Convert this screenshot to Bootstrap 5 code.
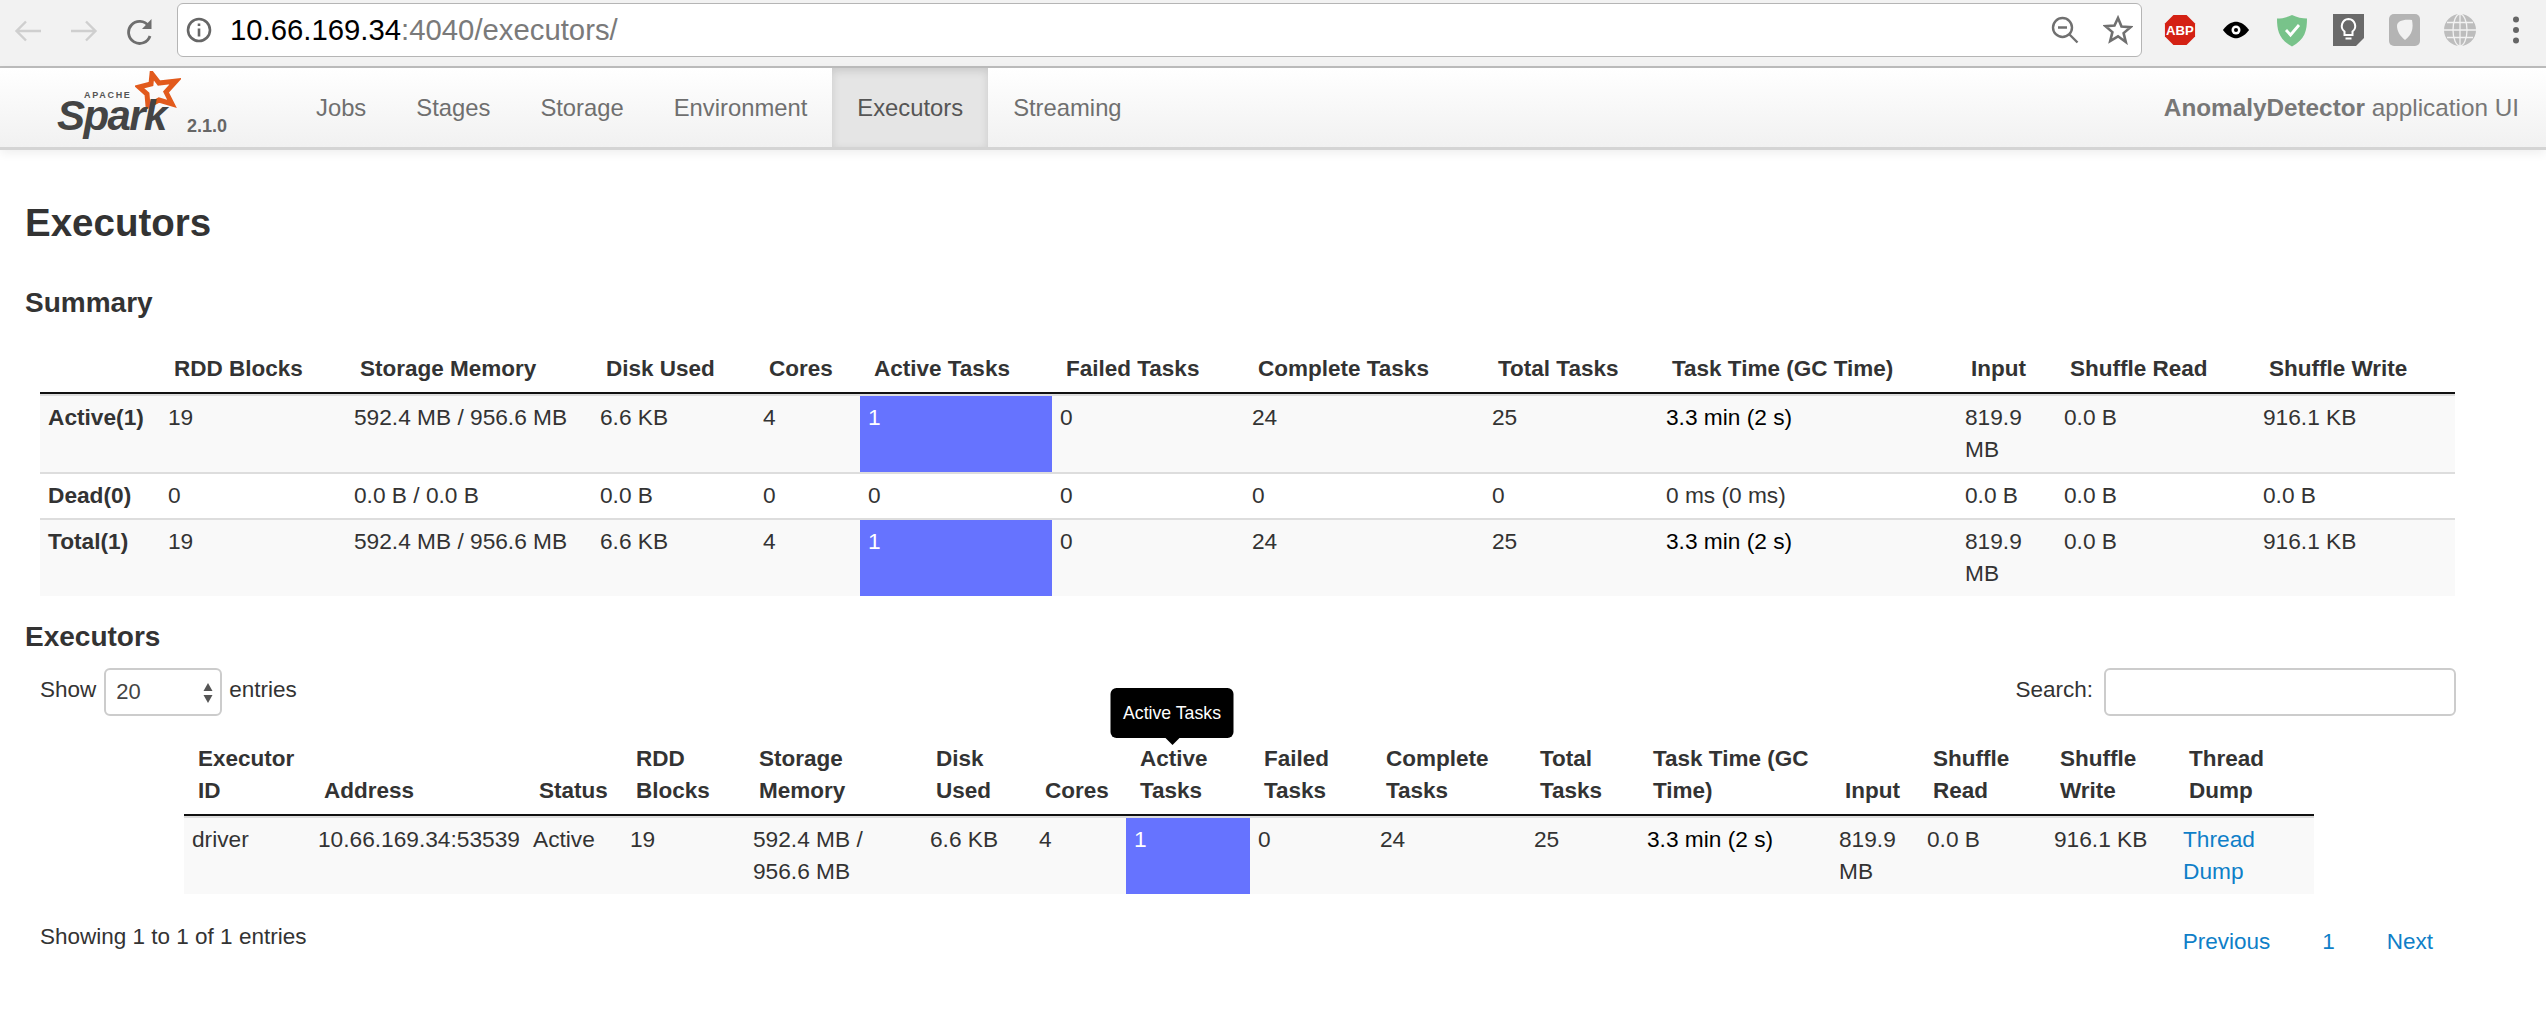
<!DOCTYPE html>
<html lang="en">

<head>
    <meta charset="UTF-8" />
    <meta name="viewport" content="width=device-width, initial-scale=1.0" />
    <title>AnomalyDetector - Executors</title>
    <link href="https://cdn.jsdelivr.net/npm/bootstrap@5.3.0/dist/css/bootstrap.min.css" rel="stylesheet" />
    <style>
        body { font-family: "Liberation Sans", Arial, sans-serif; font-size: 22.5px; line-height: 32px; color: #333; overflow: hidden; }

        /* browser chrome */
        .chrome-bar { height: 68px; padding-bottom: 6px; background: #f2f2f2; border-bottom: 2px solid #bdbdbd; }
        .nav-btn { width: 56px; }
        .nav-btns { width: 177px; }
        .url-box { width: 1965px; height: 54px; background: #fff; border: 1px solid #b5b5b5; border-radius: 6px; }
        .url-text { font-size: 29.3px; color: #7a7a7a; margin-left: 18px; }
        .url-host { color: #000; }
        .ext-slot { width: 56px; line-height: 0; }
        .ext-icons { padding-left: 10px; }

        /* spark navbar */
        .spark-nav { height: 82px; background: linear-gradient(#fff, #f1f1f1); border-bottom: 3px solid #d4d4d4; box-shadow: 0 3px 10px rgba(0, 0, 0, .07); }
        .spark-logo { width: 291px; height: 79px; }
        .logo-star { left: 135px; top: 3px; }
        .logo-word { left: 57px; top: 31px; font-size: 42px; line-height: 34px; font-weight: 700; font-style: italic; color: #444; letter-spacing: -1.6px; }
        .logo-apache { left: 84px; top: 23px; font-size: 9px; line-height: 8px; font-weight: 700; color: #555; letter-spacing: 1.7px; }
        .logo-version { left: 187px; top: 47px; font-size: 18px; line-height: 22px; font-weight: 700; color: #666; }
        .spark-nav .navbar-nav .nav-link { padding: 0 25px; height: 79px; line-height: 80px; color: #6f6f6f; font-size: 23.8px; }
        .spark-nav .navbar-nav .nav-link.active { color: #555; background: #e5e5e5; box-shadow: inset 0 3px 8px rgba(0, 0, 0, .125); }
        .app-title { color: #777; font-size: 24.3px; line-height: 80px; padding-right: 27px; }

        /* page */
        .page-body { padding: 43px 90px 0 25px; }
        .title-main { font-size: 38.5px; line-height: 60px; font-weight: 700; color: #333; margin: 0; }
        .title-sub { font-size: 28px; line-height: 40px; font-weight: 700; color: #333; margin: 0; }
        .summary-title { margin-top: 30px; }
        .indent-block { padding-left: 15px; }

        .spark-table { table-layout: fixed; border-collapse: separate; border-spacing: 0; margin: 0; color: #333; --bs-table-striped-bg: #f9f9f9; --bs-table-striped-color: #333; }
        .spark-table th { padding: 5px 4px 7px 14px; border: 0; border-bottom: 2px solid #111; font-weight: 700; vertical-align: bottom; position: relative; }
        .spark-table td { padding: 5px 8px 7px; border: 0; border-top: 2px solid #ddd; vertical-align: top; font-size: 22.7px; }
        .spark-table > tbody > tr > td.cell-busy { background: #6673ff; color: #fff; box-shadow: none; }
        .spark-table > tbody > tr > td.time-val { color: #000; }
        .spark-table a { color: #0f7fc8; text-decoration: none; }

        .summary-wrap { margin-top: 25px; }
        .summary-table { width: 2415px; }
        .exec-title { margin-top: 21px; }

        .filter-row { margin-top: 11px; height: 48px; }
        .select-wrap { margin: 0 7px 0 8px; width: 118px; height: 48px; }
        .entries-select { appearance: none; width: 118px; height: 48px; font-size: 22px; color: #444; padding: 0 10px; border: 2px solid #ccc; border-radius: 6px; background: #fff; font-family: inherit; }
        .select-arrows { right: 9px; top: 15px; pointer-events: none; }
        .search-input { width: 352px; height: 48px; margin-left: 11px; border: 2px solid #ccc; border-radius: 6px; }

        .exec-wrap { margin-top: 22px; padding-left: 159px; }
        .exec-table { width: 2130px; }

        .hint-tip { left: 50%; bottom: 76px; transform: translateX(-50%); margin-left: -16px; width: 123px; height: 50px; background: #000; color: #fff; font-size: 17.7px; font-weight: 400; line-height: 50px; text-align: center; border-radius: 6px; }
        .hint-tip::after { content: ""; position: absolute; left: 50%; top: 100%; margin-left: -7px; border: 7px solid transparent; border-bottom: 0; border-top-color: #000; }

        .foot-row { margin-top: 27px; }
        .pager-links { padding-top: 5px; margin-right: -2px; }
        .pager-links a { color: #0f7fc8; text-decoration: none; padding: 0 26px; }
        .pager-links a:last-child { padding-right: 25px; }

        /* column widths, measured off the tables */
        .sc1 { width: 120px; } .sc2 { width: 186px; } .sc3 { width: 246px; } .sc4 { width: 163px; } .sc5 { width: 105px; } .sc6 { width: 192px; } .sc7 { width: 192px; } .sc8 { width: 240px; } .sc9 { width: 174px; } .sc10 { width: 299px; } .sc11 { width: 99px; } .sc12 { width: 199px; } .sc13 { width: 200px; }
        .ec1 { width: 126px; } .ec2 { width: 215px; } .ec3 { width: 97px; } .ec4 { width: 123px; } .ec5 { width: 177px; } .ec6 { width: 109px; } .ec7 { width: 95px; } .ec8 { width: 124px; } .ec9 { width: 122px; } .ec10 { width: 154px; } .ec11 { width: 113px; } .ec12 { width: 192px; } .ec13 { width: 88px; } .ec14 { width: 127px; } .ec15 { width: 129px; } .ec16 { width: 139px; }
    </style>
</head>

<body>
    <!-- browser toolbar -->
    <div class="chrome-bar d-flex align-items-center">
        <div class="nav-btns d-flex align-items-center flex-shrink-0">
            <div class="nav-btn text-center">
                <svg width="28" height="22" viewBox="0 0 28 22" fill="none" stroke="#cfcfcf" stroke-width="2.4"><path d="M27 11H3M12 1.500L2.500 11l9.500 9.500" /></svg>
            </div>
            <div class="nav-btn text-center">
                <svg width="28" height="22" viewBox="0 0 28 22" fill="none" stroke="#cfcfcf" stroke-width="2.4"><path d="M1 11h24M16 1.500l9.500 9.500-9.500 9.500" /></svg>
            </div>
            <div class="nav-btn text-center">
                <svg width="28" height="27" viewBox="0 0 28 27" fill="none" stroke="#6e6e6e" stroke-width="2.800"><path d="M24 18a11 11 0 1 1-1.500-10" /><path d="M25.500 1v10h-9.500" fill="#6e6e6e" stroke="none" /></svg>
            </div>
        </div>
        <div class="url-box d-flex align-items-center flex-shrink-0">
            <svg class="ms-2 flex-shrink-0" width="26" height="26" viewBox="0 0 26 26" fill="none" stroke="#666" stroke-width="2.600"><circle cx="13" cy="13" r="11" /><path d="M13 11.500v8M13 6.500v2.600" /></svg>
            <div class="url-text flex-grow-1"><span class="url-host">10.66.169.34</span>:4040/executors/</div>
            <svg class="flex-shrink-0" width="28" height="28" viewBox="0 0 28 28" fill="none" stroke="#707070" stroke-width="2.400"><circle cx="11.500" cy="11.500" r="9.500" /><path d="M7 11.500h9M18.500 18.500l8 8" /></svg>
            <svg class="ms-4 me-2 flex-shrink-0" width="30" height="30" viewBox="0 0 30 30" fill="none" stroke="#707070" stroke-width="2.600"><path d="M15 3l3.500 8.500 9 .7-6.900 5.900 2.200 8.900L15 21.300 7.200 26l2.200-8.900L2.500 11.200l9-.7z" /></svg>
        </div>
        <div class="ext-icons d-flex align-items-center flex-shrink-0">
            <div class="ext-slot text-center">
                <svg width="32" height="32" viewBox="0 0 34 34"><path d="M10 1h14l9 9v14l-9 9H10l-9-9V10z" fill="#d42114" /><text x="17" y="22.500" text-anchor="middle" fill="#fff" font-family="Liberation Sans" font-weight="700" font-size="14">ABP</text></svg>
            </div>
            <div class="ext-slot text-center">
                <svg width="32" height="18" viewBox="0 0 34 22"><path d="M1 11C8 2 14 1 17 1s9 1 16 10c-7 9-13 10-16 10S8 20 1 11z" fill="#000" /><circle cx="17" cy="11" r="5.500" fill="#fff" /><circle cx="17" cy="11" r="2.500" fill="#000" /></svg>
            </div>
            <div class="ext-slot text-center">
                <svg width="32" height="33" viewBox="0 0 32 33"><path d="M16 1c5 2.500 10 3.500 15 3.500 0 12-2 21-15 28C3 25.500 1 16.500 1 4.500 6 4.500 11 3.500 16 1z" fill="#78c38a" /><path d="M10 16l4.500 5L23 11" fill="none" stroke="#fff" stroke-width="2.800" /></svg>
            </div>
            <div class="ext-slot text-center">
                <svg width="31" height="32" viewBox="0 0 31 32"><path d="M0 0h31v24l-8 8H0z" fill="#6a6a6a" /><path d="M15.500 5a7 7 0 0 0-4 12.500V21h8v-3.500a7 7 0 0 0-4-12.500zM12.500 24.500h6" fill="none" stroke="#fff" stroke-width="2" /></svg>
            </div>
            <div class="ext-slot text-center">
                <svg width="31" height="32" viewBox="0 0 31 32"><rect width="31" height="32" rx="5" fill="#b4b4b4" /><path d="M8 12c0-5 6-7 15-6 1.500 8 .5 14-7 20-5-4-8-9-8-14z" fill="#f2f2f2" /></svg>
            </div>
            <div class="ext-slot text-center">
                <svg width="32" height="32" viewBox="0 0 32 32" fill="none" stroke="#f2f2f2" stroke-width="1.300"><circle cx="16" cy="16" r="16" fill="#bdbdbd" stroke="none" /><ellipse cx="16" cy="16" rx="7" ry="16" /><path d="M16 0v32M3 8.500h26M0 16h32M3 23.500h26" /></svg>
            </div>
            <div class="ext-slot text-center">
                <svg width="8" height="28" viewBox="0 0 8 28" fill="#666"><circle cx="4" cy="3.500" r="3" /><circle cx="4" cy="14" r="3" /><circle cx="4" cy="24.500" r="3" /></svg>
            </div>
        </div>
    </div>

    <!-- spark navbar -->
    <nav class="navbar navbar-expand spark-nav p-0 align-items-start">
        <div class="spark-logo position-relative flex-shrink-0">
            <svg class="logo-star position-absolute" width="46" height="38" viewBox="0 0 46 38" fill="none" stroke="#e25a1c" stroke-width="5" stroke-linejoin="miter"><path d="M17 3l7 9 17-2-10 11 6 12-13-4-11 6-1-12L4 16l12-3z" /></svg>
            <span class="logo-apache position-absolute">APACHE</span>
            <span class="logo-word position-absolute">Spark</span>
            <span class="logo-version position-absolute">2.1.0</span>
        </div>
        <ul class="navbar-nav">
            <li class="nav-item"><a class="nav-link" href="#">Jobs</a></li>
            <li class="nav-item"><a class="nav-link" href="#">Stages</a></li>
            <li class="nav-item"><a class="nav-link" href="#">Storage</a></li>
            <li class="nav-item"><a class="nav-link" href="#">Environment</a></li>
            <li class="nav-item"><a class="nav-link active" href="#">Executors</a></li>
            <li class="nav-item"><a class="nav-link" href="#">Streaming</a></li>
        </ul>
        <div class="app-title ms-auto"><strong>AnomalyDetector</strong> application UI</div>
    </nav>

    <div class="page-body">
        <h3 class="title-main">Executors</h3>
        <h4 class="title-sub summary-title">Summary</h4>

        <div class="indent-block summary-wrap">
            <table class="table table-striped spark-table summary-table">
                <colgroup>
                    <col class="sc1"><col class="sc2"><col class="sc3"><col class="sc4"><col class="sc5"><col class="sc6"><col class="sc7"><col class="sc8"><col class="sc9"><col class="sc10"><col class="sc11"><col class="sc12"><col class="sc13">
                </colgroup>
                <thead>
                    <tr>
                        <th></th><th>RDD Blocks</th><th>Storage Memory</th><th>Disk Used</th><th>Cores</th><th>Active Tasks</th><th>Failed Tasks</th><th>Complete Tasks</th><th>Total Tasks</th><th>Task Time (GC Time)</th><th>Input</th><th>Shuffle Read</th><th>Shuffle Write</th>
                    </tr>
                </thead>
                <tbody>
                    <tr>
                        <td><strong>Active(1)</strong></td><td>19</td><td>592.4 MB / 956.6 MB</td><td>6.6 KB</td><td>4</td><td class="cell-busy">1</td><td>0</td><td>24</td><td>25</td><td class="time-val">3.3 min (2 s)</td><td>819.9 MB</td><td>0.0 B</td><td>916.1 KB</td>
                    </tr>
                    <tr>
                        <td><strong>Dead(0)</strong></td><td>0</td><td>0.0 B / 0.0 B</td><td>0.0 B</td><td>0</td><td>0</td><td>0</td><td>0</td><td>0</td><td>0 ms (0 ms)</td><td>0.0 B</td><td>0.0 B</td><td>0.0 B</td>
                    </tr>
                    <tr>
                        <td><strong>Total(1)</strong></td><td>19</td><td>592.4 MB / 956.6 MB</td><td>6.6 KB</td><td>4</td><td class="cell-busy">1</td><td>0</td><td>24</td><td>25</td><td class="time-val">3.3 min (2 s)</td><td>819.9 MB</td><td>0.0 B</td><td>916.1 KB</td>
                    </tr>
                </tbody>
            </table>
        </div>

        <h4 class="title-sub exec-title">Executors</h4>

        <div class="indent-block filter-row d-flex justify-content-between align-items-center">
            <div class="d-flex align-items-center">
                <span class="pb-1">Show</span>
                <div class="select-wrap position-relative">
                    <select class="entries-select"><option>20</option></select>
                    <svg class="select-arrows position-absolute" width="10" height="20" viewBox="0 0 10 20" fill="#555"><path d="M5 0l4.500 8h-9zM5 20l-4.500-8h9z" /></svg>
                </div>
                <span class="pb-1">entries</span>
            </div>
            <div class="d-flex align-items-center">
                <span class="pb-1">Search:</span>
                <input class="search-input" type="text" />
            </div>
        </div>

        <div class="exec-wrap">
            <table class="table table-striped spark-table exec-table">
                <colgroup>
                    <col class="ec1"><col class="ec2"><col class="ec3"><col class="ec4"><col class="ec5"><col class="ec6"><col class="ec7"><col class="ec8"><col class="ec9"><col class="ec10"><col class="ec11"><col class="ec12"><col class="ec13"><col class="ec14"><col class="ec15"><col class="ec16">
                </colgroup>
                <thead>
                    <tr>
                        <th>Executor ID</th><th>Address</th><th>Status</th><th>RDD Blocks</th><th>Storage Memory</th><th>Disk Used</th><th>Cores</th>
                        <th>Active Tasks<div class="hint-tip position-absolute">Active Tasks</div></th>
                        <th>Failed Tasks</th><th>Complete Tasks</th><th>Total Tasks</th><th>Task Time (GC Time)</th><th>Input</th><th>Shuffle Read</th><th>Shuffle Write</th><th>Thread Dump</th>
                    </tr>
                </thead>
                <tbody>
                    <tr>
                        <td>driver</td><td>10.66.169.34:53539</td><td>Active</td><td>19</td><td>592.4 MB / 956.6 MB</td><td>6.6 KB</td><td>4</td><td class="cell-busy">1</td><td>0</td><td>24</td><td>25</td><td class="time-val">3.3 min (2 s)</td><td>819.9 MB</td><td>0.0 B</td><td>916.1 KB</td><td><a href="#">Thread Dump</a></td>
                    </tr>
                </tbody>
            </table>
        </div>

        <div class="indent-block foot-row d-flex justify-content-between align-items-start">
            <div>Showing 1 to 1 of 1 entries</div>
            <div class="pager-links d-flex">
                <a href="#">Previous</a><a href="#">1</a><a href="#">Next</a>
            </div>
        </div>
    </div>

    <script src="https://cdn.jsdelivr.net/npm/bootstrap@5.3.0/dist/js/bootstrap.bundle.min.js"></script>
</body>

</html>
